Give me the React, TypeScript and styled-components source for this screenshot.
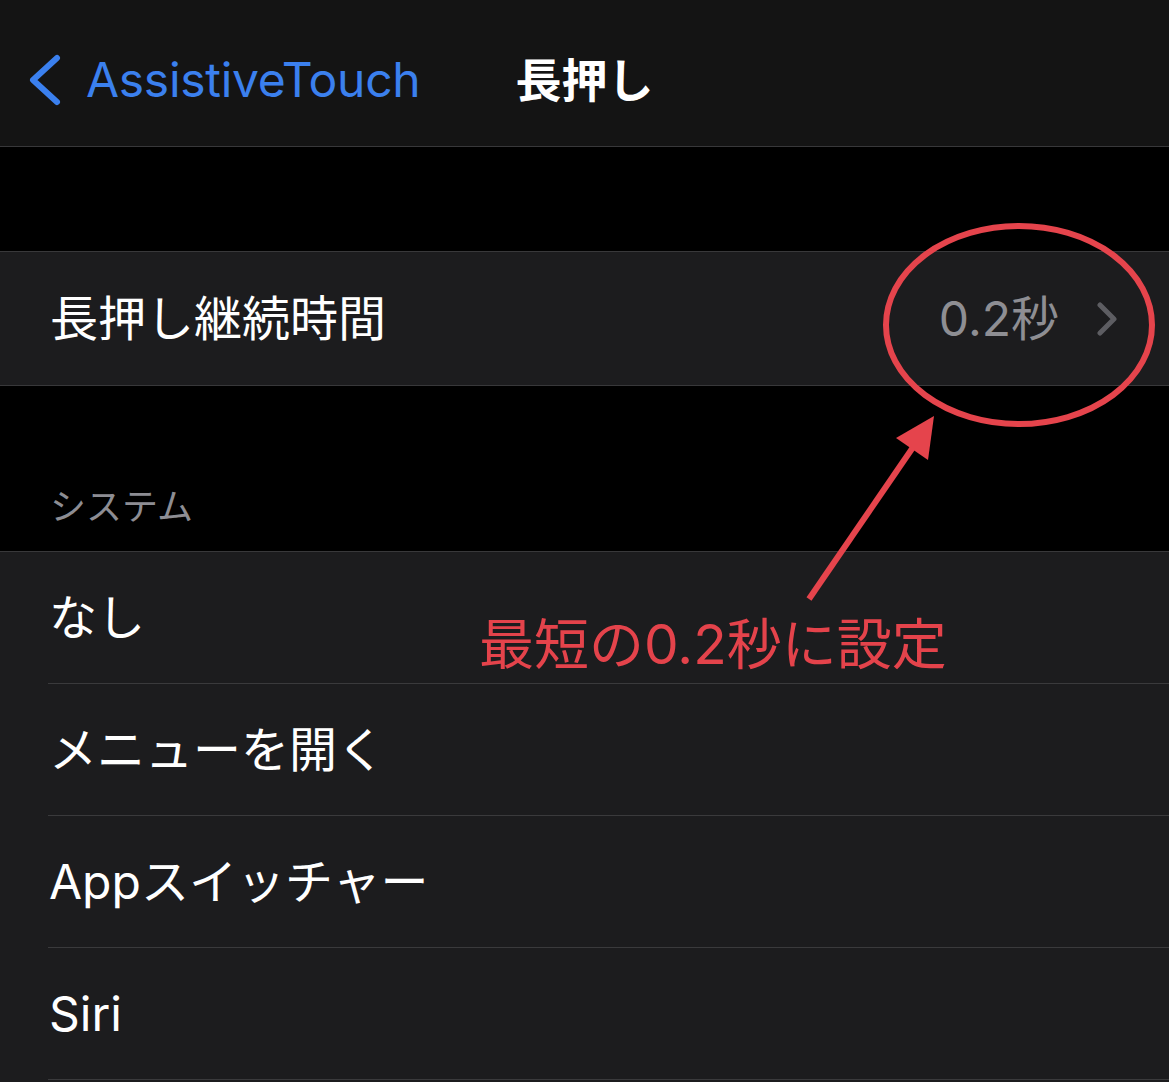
import React from 'react';
import styled, { createGlobalStyle } from 'styled-components';

const Global = createGlobalStyle`
  html, body { margin: 0; padding: 0; background: #000; }
  body {
    font-family: Inter, "Noto Sans CJK JP", sans-serif;
    -webkit-font-smoothing: antialiased;
  }
`;

const Screen = styled.div`
  position: relative;
  width: 1169px;
  height: 1082px;
  overflow: hidden;
  background: #000;
  display: flex;
  flex-direction: column;
`;

const NavBar = styled.header`
  flex: none;
  height: 147px;
  box-sizing: border-box;
  padding-top: 14px;
  background: #141414;
  border-bottom: 1px solid #38383a;
  display: grid;
  grid-template-columns: 1fr auto 1fr;
  align-items: center;
`;

const BackButton = styled.div`
  display: flex;
  align-items: center;
  gap: 25px;
  padding-left: 27px;
  color: #3b80ee;
  font-size: 48px;
  line-height: 1;
  letter-spacing: -0.3px;
`;

const Title = styled.h1`
  margin: 0;
  color: #fff;
  font-size: 46px;
  font-weight: 700;
  line-height: 1;
`;

const Spacer = styled.div<{ $h: number }>`
  flex: none;
  height: ${(p) => p.$h}px;
`;

const Group = styled.section`
  flex: none;
  background: #1c1c1e;
  border-top: 1px solid #38383a;
  border-bottom: 1px solid #38383a;
`;

const SettingRow = styled.div`
  height: 133px;
  box-sizing: border-box;
  padding: 0 51px 0 50px;
  display: flex;
  align-items: center;
  color: #fff;
  font-size: 48px;
`;

const Label = styled.span`
  flex: 1;
  line-height: 1;
`;

const Value = styled.span`
  color: #8e8e93;
  font-size: 48px;
  line-height: 1;
  margin-right: 38px;
`;

const SectionHeader = styled.div`
  flex: none;
  height: 165px;
  box-sizing: border-box;
  display: flex;
  align-items: flex-end;
  padding: 0 0 22px 50px;
  color: #8d8d93;
  font-size: 36px;
  line-height: 1.2;
`;

const List = styled.section`
  flex: 1;
  background: #1c1c1e;
  border-top: 1px solid #38383a;
`;

const ListRow = styled.div`
  padding-left: 48px;
`;

const ListCell = styled.div`
  height: 131px;
  border-bottom: 1px solid #3a3a3c;
  display: flex;
  align-items: center;
  padding-left: 1px;
  color: #fff;
  font-size: 48px;
  line-height: 1;
`;

const Overlay = styled.svg`
  position: absolute;
  left: 0;
  top: 0;
  pointer-events: none;
`;

const Note = styled.div`
  position: absolute;
  left: 479px;
  top: 617px;
  color: #e4434b;
  font-size: 55px;
  line-height: 1;
  white-space: nowrap;
  pointer-events: none;
`;

const BackChevron = () => (
  <svg width="34" height="52" viewBox="0 0 34 52" fill="none">
    <path d="M30 4 L6 26 L30 48" stroke="#3b80ee" strokeWidth="6" strokeLinecap="round" strokeLinejoin="round" />
  </svg>
);

const Disclosure = () => (
  <svg width="21" height="34" viewBox="0 0 21 34" fill="none">
    <path d="M3 3 L17 17 L3 31" stroke="#5d5d62" strokeWidth="5" strokeLinecap="round" strokeLinejoin="round" />
  </svg>
);

const actions = ['なし', 'メニューを開く', 'Appスイッチャー', 'Siri'];

export default function App() {
  return (
    <Screen>
      <Global />
      <NavBar>
        <BackButton>
          <BackChevron />
          <span>AssistiveTouch</span>
        </BackButton>
        <Title>長押し</Title>
        <div />
      </NavBar>
      <Spacer $h={104} />
      <Group>
        <SettingRow>
          <Label>長押し継続時間</Label>
          <Value>0.2秒</Value>
          <Disclosure />
        </SettingRow>
      </Group>
      <SectionHeader>システム</SectionHeader>
      <List>
        {actions.map((a) => (
          <ListRow key={a}>
            <ListCell>{a}</ListCell>
          </ListRow>
        ))}
      </List>

      <Overlay width="1169" height="1082" viewBox="0 0 1169 1082">
        <ellipse cx="1019" cy="325" rx="133" ry="99" fill="none" stroke="#e5444c" strokeWidth="6" />
        <line x1="809" y1="599" x2="918" y2="440" stroke="#e5444c" strokeWidth="6" />
        <polygon points="934,416 896,438 928,460" fill="#e5444c" />
      </Overlay>
      <Note>最短の0.2秒に設定</Note>
    </Screen>
  );
}
